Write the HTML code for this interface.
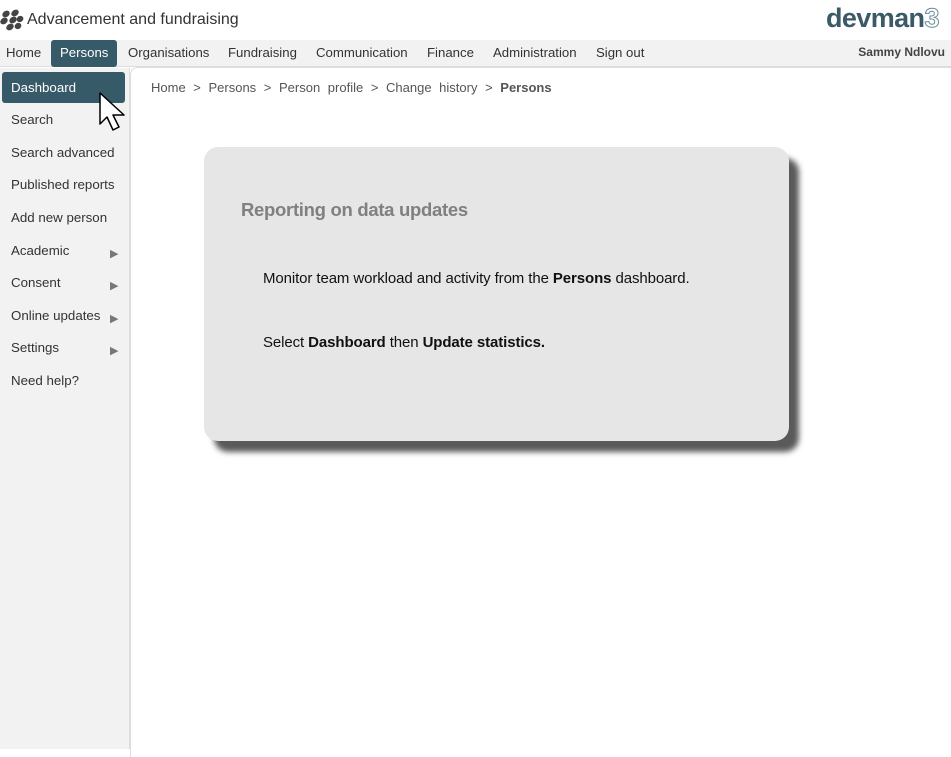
<!DOCTYPE html>
<html><head><meta charset="utf-8"><style>
*{margin:0;padding:0;box-sizing:border-box}
body{width:951px;height:749px;overflow:hidden;background:#fff;font-family:"Liberation Sans",Arial,sans-serif;position:relative}
.title{position:absolute;left:27px;top:11px;font-size:16px;color:#333}
.logo{position:absolute;left:0;top:9px}
.dev{position:absolute;left:826px;top:3px;font-size:27px;font-weight:bold;color:#3b5a68;letter-spacing:-0.6px}
.dev span{color:#fff;-webkit-text-stroke:1px #6a8a98}
.nav{position:absolute;left:0;top:40px;width:951px;height:27px;background:#f2f2f2;border-bottom:1px solid #ddd}
.nav a{position:absolute;top:5px;font-size:13.2px;color:#333}
.nav .act{top:0;height:27px;padding:5px 9px;background:#375a68;color:#fff;border-radius:3px}
.user{position:absolute;right:6px;top:5px;font-size:12px;font-weight:bold;color:#444}
.side{position:absolute;left:0;top:68px;width:130px;height:681px;background:#f2f2f2;border-right:1px solid #ddd}
.side div{position:absolute;left:11px;font-size:13.3px;color:#333}
.side .tri{left:110px;font-size:11px;color:#777}
.dash{position:absolute;left:2px;top:72px;width:123px;height:31px;background:#375a68;border-radius:3px;color:#fff;font-size:13.3px;padding:8px 9px}
.main{position:absolute;left:130px;top:67px;width:830px;height:690px;background:#fff;border-top-left-radius:8px;border-left:1px solid #ddd;border-top:1px solid #ddd}
.bc{position:absolute;left:151px;top:80px;font-size:13px;color:#555;word-spacing:4px}
.card{position:absolute;left:204px;top:147px;width:585px;height:294px;background:#e6e6e6;border-radius:14px;box-shadow:10px 11px 6px #5a5a5a;font-family:"Liberation Sans",sans-serif}
.card h2{position:absolute;left:37px;top:52px;font-size:18.5px;color:#808080;letter-spacing:-0.3px}
.card p{position:absolute;left:59px;font-size:15px;color:#111;letter-spacing:-0.1px}
</style></head><body>
<svg class="logo" width="24" height="22" viewBox="0 0 24 22"><g fill="#444"><ellipse cx="6" cy="5" rx="4" ry="3" transform="rotate(-35 6 5)"/><ellipse cx="15" cy="4" rx="4" ry="3" transform="rotate(-35 15 4)"/><ellipse cx="4" cy="12" rx="4" ry="3" transform="rotate(-35 4 12)"/><ellipse cx="13" cy="11" rx="4" ry="3" transform="rotate(-35 13 11)"/><ellipse cx="20" cy="10" rx="3.5" ry="3" transform="rotate(-35 20 10)"/><ellipse cx="10" cy="18" rx="4" ry="3" transform="rotate(-35 10 18)"/><ellipse cx="18" cy="17" rx="3.5" ry="3" transform="rotate(-35 18 17)"/></g></svg>
<div class="title">Advancement and fundraising</div>
<div class="dev">devman<span>3</span></div>
<div class="nav">
<a style="left:6px">Home</a>
<a class="act" style="left:51px">Persons</a>
<a style="left:128px">Organisations</a>
<a style="left:228px">Fundraising</a>
<a style="left:316px">Communication</a>
<a style="left:427px">Finance</a>
<a style="left:493px">Administration</a>
<a style="left:596px">Sign out</a>
<span class="user">Sammy Ndlovu</span>
</div>
<div class="side">
<div style="top:44px">Search</div>
<div style="top:77px">Search advanced</div>
<div style="top:109px">Published reports</div>
<div style="top:142px">Add new person</div>
<div style="top:175px">Academic</div><div class="tri" style="top:179px">▶</div>
<div style="top:207px">Consent</div><div class="tri" style="top:211px">▶</div>
<div style="top:240px">Online updates</div><div class="tri" style="top:244px">▶</div>
<div style="top:272px">Settings</div><div class="tri" style="top:276px">▶</div>
<div style="top:305px">Need help?</div>
</div>
<div class="main"></div>
<div class="dash">Dashboard</div>
<svg style="position:absolute;left:99px;top:92px" width="30" height="42" viewBox="0 0 30 42"><path d="M1 1 L1 32 L8 25 L14 38 L20 35 L14 23 L25 23 Z" fill="#fff" stroke="#000" stroke-width="1.5" stroke-linejoin="round"/></svg>
<div class="bc">Home &gt; Persons &gt; Person profile &gt; Change history &gt; <b>Persons</b></div>
<div class="card">
<h2>Reporting on data updates</h2>
<p style="top:123px">Monitor team workload and activity from the <b>Persons</b> dashboard.</p>
<p style="top:187px">Select <b>Dashboard</b> then <b>Update statistics.</b></p>
</div>
</body></html>
